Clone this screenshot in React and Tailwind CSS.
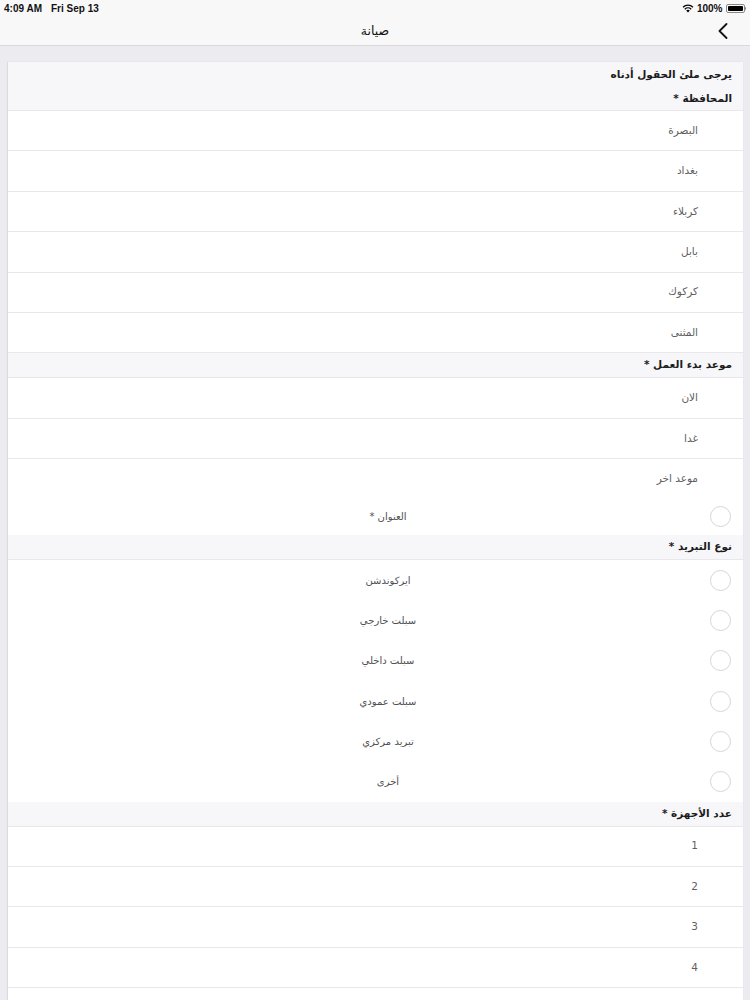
import React from "react";

const AR = { fontFamily: '"DejaVu Sans", "Noto Sans", sans-serif' };

function Row({ children, last }) {
  return (
    <div className={`h-[40.4px] flex items-center justify-start pr-[45px] ${last ? "" : "border-b border-[#e8e8ec]"}`}>
      <span className="text-[10.5px] text-[#5f5f63]">{children}</span>
    </div>
  );
}

function Section({ children }) {
  return (
    <div className="h-[25px] flex items-center pr-[11px] bg-[#f7f7f9] border-b border-[#e8e8ec]">
      <span className="text-[10.5px] font-bold text-[#1c1c1e]">{children}</span>
    </div>
  );
}

function Radio({ label, h = "h-[40.2px]", top = false }) {
  return (
    <div className={`${h} flex ${top ? "items-start pt-[6px]" : "items-center"}`}>
      <div className="ml-[10px] mr-[12px] w-[21px] h-[21px] rounded-full border border-[#d6d6da] bg-white shrink-0" />
      <div className={`mr-[262px] w-[100px] text-center text-[10px] text-[#4f4f53] ${top ? "pt-[3px]" : ""}`}>{label}</div>
    </div>
  );
}

export default function App() {
  return (
    <div className="w-[750px] h-[1000px] overflow-hidden bg-[#ececf0]" style={AR}>
      {/* status bar */}
      <div className="h-[16px] bg-[#f8f8f8] flex items-center justify-between px-[4px] text-[10px] font-semibold text-[#111]" style={{ fontFamily: '"Liberation Sans", Arial, sans-serif' }} dir="ltr">
        <div className="flex gap-[9px]">
          <span>4:09 AM</span>
          <span>Fri Sep 13</span>
        </div>
        <div className="flex items-center gap-[3px]">
          <svg width="12" height="9" viewBox="0 0 12 9">
            <path d="M6 8.6 L4.2 6.6 A2.6 2.6 0 0 1 7.8 6.6 Z" fill="#000" />
            <path d="M2.8 5.2 A4.6 4.6 0 0 1 9.2 5.2" stroke="#000" strokeWidth="1.3" fill="none" />
            <path d="M1 3.2 A7.2 7.2 0 0 1 11 3.2" stroke="#000" strokeWidth="1.3" fill="none" />
          </svg>
          <span>100%</span>
          <div className="flex items-center">
            <div className="w-[19px] h-[9px] rounded-[2px] border border-[#888] p-[1px]">
              <div className="w-full h-full bg-black rounded-[1px]" />
            </div>
            <div className="w-[1.5px] h-[3px] bg-[#888] rounded-r" />
          </div>
        </div>
      </div>
      {/* nav bar */}
      <div className="h-[30px] bg-[#f8f8f8] border-b border-[#d9d9dd] flex items-center justify-center relative">
        <span className="text-[12.5px] text-[#111] pt-[2px]">صيانة</span>
        <svg className="absolute right-[22px] top-[7px]" width="10" height="16" viewBox="0 0 10 16">
          <path d="M8.5 1 L1.5 8 L8.5 15" stroke="#111" strokeWidth="1.8" fill="none" strokeLinecap="round" strokeLinejoin="round" />
        </svg>
      </div>
      {/* content */}
      <div className="pt-[16px] pl-[7px] pr-[7px]">
        <div className="bg-white border-l border-[#dcdce0] shadow-[0_0_1px_rgba(0,0,0,0.08)]" dir="rtl">
          <div className="bg-[#f7f7f9] border-b border-[#e8e8ec] h-[49px] flex flex-col justify-center pr-[11px] gap-[13px]">
            <span className="text-[10.5px] font-bold text-[#1c1c1e] leading-none">يرجى ملئ الحقول أدناه</span>
            <span className="text-[10.5px] font-bold text-[#1c1c1e] leading-none">المحافظة *</span>
          </div>
          <Row>البصرة</Row>
          <Row>بغداد</Row>
          <Row>كربلاء</Row>
          <Row>بابل</Row>
          <Row>كركوك</Row>
          <Row>المثنى</Row>
          <Section>موعد بدء العمل *</Section>
          <Row>الان</Row>
          <Row>غدا</Row>
          <Row last>موعد اخر</Row>
          <Radio label="العنوان *" h="h-[35px]" top />
          <Section>نوع التبريد *</Section>
          <div className="h-[1px]" />
          <Radio label="ايركوندشن" />
          <Radio label="سبلت خارجي" />
          <Radio label="سبلت داخلي" />
          <Radio label="سبلت عمودي" />
          <Radio label="تبريد مركزي" />
          <Radio label="أخرى" />
          <Section>عدد الأجهزة *</Section>
          <Row>1</Row>
          <Row>2</Row>
          <Row>3</Row>
          <Row>4</Row>
          <div className="h-[40px]" />
        </div>
      </div>
    </div>
  );
}
